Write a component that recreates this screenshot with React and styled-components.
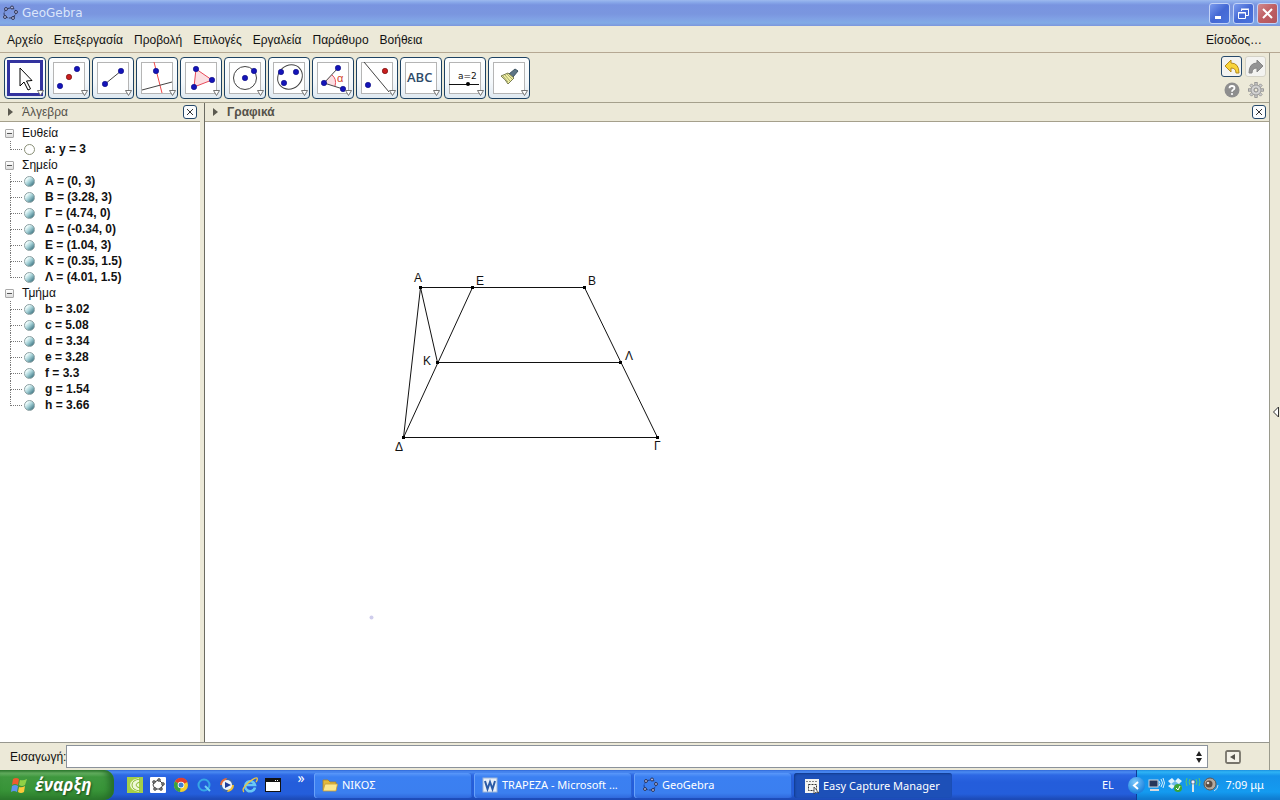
import React from "react";
import styled, { createGlobalStyle, css } from "styled-components";

const GlobalStyle = createGlobalStyle`
  * { box-sizing: border-box; }
  body { margin: 0; background: #ece9d8; }
  button, input { font: inherit; color: inherit; }
  button { padding: 0; border: 0; background: none; cursor: default; }
  ul { list-style: none; margin: 0; padding: 0; }
  svg { display: block; flex: none; }
`;

const Desktop = styled.div`
  display: flex;
  flex-direction: column;
  min-height: 100vh;
  font: 12px/16px "Liberation Sans", Arial, sans-serif;
  color: #111;
  background: #ece9d8;
`;

/* Title bar */

const TitleBar = styled.header`
  display: flex;
  align-items: center;
  gap: 4px;
  height: 26px;
  padding: 0 2px;
  background: linear-gradient(#9db9ee 0, #8aaaea 2px, #7994e0 5px, #7a96df 14px, #7f9fe4 18px, #82abe6 23px, #7c96dc 26px);
`;

const Title = styled.h1`
  flex: 1;
  margin: 0;
  font: 12px/18px "DejaVu Sans", Verdana, sans-serif;
  color: #dbe6fb;
`;

const CaptionButton = styled.button`
  display: grid;
  place-items: center;
  width: 21px;
  height: 21px;
  border: 1px solid #c3d3f7;
  border-radius: 3px;
  background: ${(p) =>
    p.$close
      ? "linear-gradient(135deg, #d08a90, #bf5e62 50%, #b0555e)"
      : "linear-gradient(135deg, #7c9cee, #4468d4 50%, #4a74dc)"};
`;

const CaptionGroup = styled.div`
  display: flex;
  gap: 3px;
`;

/* Menu */

const MenuBar = styled.nav`
  display: flex;
  align-items: center;
  gap: 11px;
  height: 27px;
  padding: 2px 18px 0 7px;
  border-bottom: 1px solid #b5a893;
`;

const MenuItem = styled.button`
  line-height: 16px;
  margin-left: ${(p) => (p.$end ? "auto" : "0")};
`;

/* Tool bar */

const Body = styled.div`
  flex: 1;
  display: flex;
`;

const Main = styled.main`
  flex: 1;
  min-width: 0;
  display: flex;
  flex-direction: column;
`;

const SideStrip = styled.aside`
  display: flex;
  align-items: center;
  justify-content: flex-end;
  width: 11px;
  border-left: 1px solid #9a9a8c;
`;

const ToolBar = styled.div`
  display: flex;
  justify-content: space-between;
  height: 50px;
  padding: 4px 3px 0 4px;
  border-bottom: 1px solid #a5a08c;
`;

const Tools = styled.div`
  display: flex;
  gap: 2px;
`;

const ToolButton = styled.button`
  display: grid;
  place-items: center;
  width: 42px;
  height: 42px;
  border: 1px solid #1d4263;
  border-radius: 4px;
  background: linear-gradient(#fdfefe, #f4f8fb 60%, #dfe9f1);
`;

const QuickActions = styled.div`
  display: grid;
  grid-template-columns: 21px 21px;
  gap: 2px 3px;
  align-content: start;
  margin-top: -1px;
`;

const QuickButton = styled.button`
  display: grid;
  place-items: center;
  width: 21px;
  height: 21px;
  border-radius: 3px;
  border: 1px solid ${(p) => (p.$frame ? p.$frame : "transparent")};
  background: ${(p) => (p.$frame ? "#f3f3f0" : "none")};
`;

/* Panels */

const Panels = styled.div`
  flex: 1;
  display: flex;
`;

const AlgebraPanel = styled.section`
  display: flex;
  flex-direction: column;
  width: 200px;
  background: #fff;
`;

const Splitter = styled.div`
  width: 5px;
  border-right: 1px solid #6b6b62;
  background: #ece9d8;
`;

const GraphicsPanel = styled.section`
  flex: 1;
  min-width: 0;
  display: flex;
  flex-direction: column;
  background: #fff;
`;

const PanelHeader = styled.header`
  display: flex;
  align-items: center;
  gap: 9px;
  height: 19px;
  padding: 0 3px 0 8px;
  background: #ece9d8;
  border-bottom: 1px solid #a5a08c;
`;

const PanelTitle = styled.h2`
  flex: 1;
  margin: 0;
  font-size: 12px;
  line-height: 16px;
  font-weight: ${(p) => (p.$active ? "bold" : "normal")};
  color: #55524a;
`;

const CloseButton = styled.button`
  display: grid;
  place-items: center;
  width: 14px;
  height: 14px;
  border: 1px solid #26496b;
  border-radius: 3px;
  background: #fbfcfd;
`;

/* Object tree */

const Tree = styled.ul`
  padding: 3px 0 0 5px;
`;

const GroupRow = styled.div`
  display: flex;
  align-items: center;
  gap: 8px;
  height: 16px;
`;

const Fold = styled.button`
  display: grid;
  place-items: center;
  width: 9px;
  height: 9px;
  border: 1px solid #a9a9a9;
  border-radius: 1px;
  background: linear-gradient(#fff, #ddd);
`;

const Item = styled.li`
  position: relative;
  display: flex;
  align-items: center;
  gap: 10px;
  height: 16px;
  padding-left: 19px;
  font-weight: bold;

  &::before {
    content: "";
    position: absolute;
    left: 5px;
    top: 0;
    width: 11px;
    height: 8px;
    border-left: 1px dotted #777;
    border-bottom: 1px dotted #777;
  }
  &:not(:last-child)::after {
    content: "";
    position: absolute;
    left: 5px;
    top: 8px;
    height: 8px;
    border-left: 1px dotted #777;
  }
`;

const Marble = styled.button`
  width: 11px;
  height: 11px;
  border-radius: 50%;
  border: 1px solid ${(p) => (p.$hidden ? "#8a9078" : "#8ba0a2")};
  background: ${(p) =>
    p.$hidden ? "#fff" : "linear-gradient(135deg, #f2ffff 20%, #a4d0d6 50%, #3c7482 90%)"};
`;

const Canvas = styled.svg`
  flex: 1;
  width: 100%;
  min-height: 340px;
`;

const PointLabel = styled.text`
  font: 12px "Liberation Sans", Arial, sans-serif;
  fill: #111;
`;

/* Input bar */

const InputBar = styled.form`
  display: flex;
  align-items: center;
  height: 28px;
  padding: 0 28px 0 10px;
  border-top: 1px solid #97978f;
`;

const InputLabel = styled.label`
  width: 56px;
`;

const InputBox = styled.div`
  flex: 1;
  display: flex;
  align-items: center;
  height: 23px;
  padding-right: 4px;
  margin-right: 17px;
  border: 1px solid #8b929b;
  background: #fff;
`;

const CommandInput = styled.input`
  flex: 1;
  height: 19px;
  padding: 0 3px;
  border: 0;
  outline: 0;
  background: none;
`;

/* Task bar */

const TaskBar = styled.footer`
  display: flex;
  height: 30px;
  font: 11px/16px "Noto Sans", "Open Sans", Tahoma, sans-serif;
  color: #fff;
  background: linear-gradient(#2f68d8 0, #4b8bf2 2px, #2d68e4 5px, #245ddb 12px, #245edb 24px, #1d4bb8 29px);
`;

const StartButton = styled.button`
  display: flex;
  align-items: center;
  gap: 7px;
  width: 114px;
  padding-left: 11px;
  border-radius: 0 10px 10px 0;
  font: italic bold 17px/22px "Open Sans", "Noto Sans", sans-serif;
  text-shadow: 1px 1px 2px #1c4a1c;
  background: linear-gradient(#2f7d2f 0, #6bb566 3px, #3f983f 7px, #389438 20px, #2e7f2e 29px);
  box-shadow: inset -5px 0 6px #276f2a;
`;

const QuickLaunch = styled.div`
  display: flex;
  align-items: center;
  gap: 7px;
  width: 200px;
  padding-left: 13px;
`;

const LaunchButton = styled.button`
  width: 16px;
  height: 16px;
`;

const More = styled.button`
  align-self: flex-start;
  width: 12px;
  margin-left: 7px;
  line-height: 16px;
  font-size: 14px;
`;

const Tasks = styled.div`
  flex: 1;
  display: flex;
  gap: 2px;
  padding: 3px 0 2px;
`;

const Task = styled.button`
  display: flex;
  align-items: center;
  gap: 4px;
  width: 158px;
  height: 25px;
  border-radius: 3px;
  text-align: left;
  white-space: nowrap;
  ${(p) =>
    p.$pressed
      ? css`
          padding-left: 10px;
          gap: 3px;
          background: #1d50b8;
          box-shadow: inset 1px 1px 2px #123a8c;
        `
      : css`
          padding: 0 0 2px 8px;
          background: linear-gradient(#5a98fa, #3b80f2 4px, #3b7ff0 20px, #3069dc);
          box-shadow: inset 1px 0 0 #6aa2fa, inset -1px 0 0 #2b62d4;
        `}
`;

const Language = styled.button`
  width: 34px;
  padding-right: 10px;
  text-align: left;
`;

const Tray = styled.div`
  display: flex;
  align-items: center;
  gap: 2px;
  width: 144px;
  border-left: 1px solid #0f3c96;
  background: linear-gradient(#1a8fdf 0, #2fb4f5 2px, #1592ea 6px, #149bf0 22px, #0f7cd0 29px);
`;

const TrayArrow = styled.button`
  display: grid;
  place-items: center;
  width: 17px;
  height: 17px;
  margin-left: -9px;
  border-radius: 50%;
  background: radial-gradient(circle at 40% 30%, #7cc8fb, #1f86e0 70%);
`;

const TrayIcons = styled.div`
  display: flex;
  gap: 2px;
`;

const Clock = styled.time`
  margin-left: auto;
  padding-right: 16px;
`;

/* Drawings */

const blue = { fill: "#1414b8", stroke: "#0a0a80" };
const Dot = ({ x, y, red }) => (
  <circle cx={x} cy={y} r="2.700" strokeWidth="0.6" {...(red ? { fill: "#c81e1e", stroke: "#600" } : blue)} />
);

const toolDrawings = {
  move: <path d="M14 7v18l4-4 4 8 2.5-1.2-4-7.8 5.5-.5z" fill="#fff" stroke="#000" />,
  point: (<><Dot x={10} y={27} /><Dot x={19} y={18} red /><Dot x={27} y={10} /></>),
  line: (<><path d="M11 25L27 12" stroke="#444" /><Dot x={11} y={25} /><Dot x={27} y={12} /></>),
  perpendicular: (<><path d="M16 3L24 34" stroke="#f04848" /><path d="M4 31L34 23" stroke="#444" /><Dot x={18} y={12} /></>),
  polygon: (<><path d="M14 10L30 21L12 28z" fill="#fbdfe2" stroke="#e84a5a" /><Dot x={14} y={10} /><Dot x={30} y={21} /><Dot x={12} y={28} /></>),
  circle: (<><circle cx="19" cy="19" r="11.5" fill="none" stroke="#444" /><Dot x={19} y={19} /><Dot x={28} y={12} /></>),
  ellipse: (<><ellipse cx="20" cy="18" rx="13" ry="11.500" transform="rotate(-42 20 18)" fill="none" stroke="#444" /><Dot x={11} y={13} /><Dot x={26} y={13} /><Dot x={14} y={24} /></>),
  angle: (
    <>
      <path d="M10 24L18 15Q22 19 21 27z" fill="#fbdfe2" />
      <path d="M18 16Q23 20 21 27" fill="none" stroke="#e84a5a" />
      <path d="M24 9L10 24L29 30" fill="none" stroke="#444" />
      <Dot x={24} y={9} /><Dot x={10} y={24} /><Dot x={29} y={30} />
      <text x="23" y="23" fontSize="11" fill="#d2442c">α</text>
    </>
  ),
  reflect: (<><path d="M6 3L31 33" stroke="#444" /><Dot x={27} y={12} red /><Dot x={10} y={26} /></>),
  text: <text x="5" y="23" fontSize="13" fontWeight="600" fontFamily="Open Sans" fill="#2d4a68">ABC</text>,
  slider: (<><text x="12" y="20" fontSize="9" fontFamily="DejaVu Sans" fill="#111">a=2</text><path d="M3 25.500H33" stroke="#111" /><circle cx="22" cy="25" r="2" /></>),
  brush: (
    <>
      <path d="M19 15L25 10L28 12L23 18z" fill="#5d7484" stroke="#3d5462" />
      <path d="M11 17L18 14L24 19L18 25Q16 21 11 17z" fill="#f2f0a0" stroke="#777b50" />
      <path d="M13 17L18 23M15 16L20 22M17 15L22 20" stroke="#8f9465" strokeWidth=".8" />
    </>
  ),
};

const Tool = ({ kind, label, selected }) => (
  <ToolButton aria-label={label} aria-pressed={!!selected}>
    <svg width="40" height="40" viewBox="0 0 40 40">
      {selected ? (
        <rect x="3.500" y="3.500" width="33" height="33" fill="#fff" stroke="#33339f" strokeWidth="3" />
      ) : (
        <rect x="4.500" y="4.500" width="31" height="31" fill="#fff" stroke="#b5b5b5" />
      )}
      <g transform={selected ? "translate(1 3)" : "translate(1 1)"}>{toolDrawings[kind]}</g>
      <path d="M32.500 32.500H38.500L35.500 37.500z" fill="#fff" stroke="#666" strokeWidth=".9" />
    </svg>
  </ToolButton>
);

const Cross = () => (
  <svg width="8" height="8" viewBox="0 0 8 8"><path d="M1 1L7 7M7 1L1 7" stroke="#333" /></svg>
);

const Disclosure = () => (
  <svg width="5" height="8" viewBox="0 0 5 8"><path d="M0 0L5 4L0 8z" fill="#5c5a50" /></svg>
);

const RingLogo = ({ size = 16, line = "#333c62" }) => (
  <svg width={size} height={size} viewBox="0 0 16 16">
    <ellipse cx="8" cy="8" rx="6" ry="5" fill="none" stroke={line} strokeDasharray="3 1" transform="rotate(-15 8 8)" />
    {[[4, 4], [10, 2.5], [14, 7], [11, 13], [3, 12]].map(([x, y]) => (
      <circle key={x} cx={x} cy={y} r="1.500" fill="#aab0de" stroke="#20243c" strokeWidth=".8" />
    ))}
  </svg>
);

const launchers = {
  Camtasia: (
    <svg width="16" height="16" viewBox="0 0 16 16">
      <rect width="16" height="16" fill="#a5cf48" />
      <path d="M12 1Q3 3 3 8T12 15" fill="#f0f8d8" />
      <path d="M13 2Q5 3 5 8T13 14M13 5Q9 6 9 8T13 11" fill="none" stroke="#8fbb3c" />
    </svg>
  ),
  GeoGebra: (
    <svg width="16" height="16" viewBox="0 0 16 16">
      <rect width="16" height="16" rx="1" fill="#fff" />
      <path d="M4 5L9 3L13 7L11 12L5 12L3 8z" fill="none" stroke="#444" />
      {[[4, 5], [9, 3], [13, 7], [11, 12], [5, 12]].map(([x, y]) => (
        <circle key={x} cx={x} cy={y} r="1.400" fill="#888" stroke="#222" strokeWidth=".6" />
      ))}
    </svg>
  ),
  Chrome: (
    <svg width="16" height="16" viewBox="0 0 16 16">
      <circle cx="8" cy="8" r="7" fill="#f4cf2c" />
      <path d="M8 8L2 4.400A7 7 0 0 1 14.500 5z" fill="#e0402e" />
      <path d="M8 8L2 4.400A7 7 0 0 0 7 15z" fill="#3ba23f" />
      <circle cx="8" cy="8" r="3.300" fill="#fff" /><circle cx="8" cy="8" r="2.500" fill="#3d7fd6" />
    </svg>
  ),
  QuickTime: (
    <svg width="16" height="16" viewBox="0 0 16 16">
      <circle cx="8" cy="8" r="5.500" fill="none" stroke="#36a6e6" strokeWidth="2" />
      <path d="M9 9L14 14" stroke="#6fd0f4" strokeWidth="2" />
    </svg>
  ),
  "Media Player": (
    <svg width="16" height="16" viewBox="0 0 16 16">
      <circle cx="8" cy="8" r="7" fill="#3567b8" />
      <path d="M8 1A7 7 0 0 0 1 8H5z" fill="#e66a3a" /><path d="M8 15A7 7 0 0 0 15 8H11z" fill="#f0bf34" />
      <circle cx="8" cy="8" r="5" fill="#eef3fb" /><path d="M6 5L12 8L6 11z" fill="#203c9a" />
    </svg>
  ),
  "Internet Explorer": (
    <svg width="16" height="16" viewBox="0 0 16 16">
      <path d="M13 10.500A5 5 0 1 1 13 8H4" fill="none" stroke="#69c7f5" strokeWidth="2.600" />
      <path d="M2 15Q-1 12 6 6T15 1Q16 3 14 5" fill="none" stroke="#f0c63c" strokeWidth="1.300" />
    </svg>
  ),
  Window: (
    <svg width="16" height="16" viewBox="0 0 16 16">
      <rect x=".5" y="1.500" width="15" height="13" fill="#fff" stroke="#111" />
      <path d="M1 3.500H15" stroke="#111" strokeWidth="3" /><path d="M10 3.500H14" stroke="#fff" strokeDasharray="1 1" />
    </svg>
  ),
};

const FolderIcon = () => (
  <svg width="16" height="16" viewBox="0 0 16 16">
    <path d="M1 3H6L8 5H14V13H1z" fill="#e2b93c" stroke="#a8842a" strokeWidth=".8" />
    <path d="M3 7H15.500L14 14H1z" fill="#fbe88e" stroke="#c79a34" strokeWidth=".8" />
  </svg>
);

const WordIcon = () => (
  <svg width="16" height="16" viewBox="0 0 16 16">
    <rect x="1" y="1" width="14" height="14" fill="#e8eff9" stroke="#9db5d8" />
    <path d="M3 4L5.500 12L8 5L10.500 12L13 4" fill="none" stroke="#2a5aa6" strokeWidth="2" />
  </svg>
);

const CaptureIcon = () => (
  <svg width="16" height="16" viewBox="0 0 16 16">
    <rect x="1" y="1" width="14" height="14" fill="#f5f5f2" />
    <path d="M2 3.500H14" stroke="#888" strokeDasharray="2 1" />
    <rect x="4.500" y="6.500" width="8" height="6" fill="none" stroke="#333" strokeDasharray="2 1" />
    <path d="M10 9V16L12 14L15 15z" fill="#fff" stroke="#333" strokeWidth=".8" />
  </svg>
);

const Windows = () => (
  <svg width="17" height="17" viewBox="0 0 17 17">
    <path d="M2 2Q5 0 8 2L7 8Q4 6 1 8z" fill="#ee5b2e" />
    <path d="M9 3Q12 4 16 2L14 8Q11 10 8 8z" fill="#8fd146" />
    <path d="M1 9Q4 7 7 9L6 15Q3 13 0 15z" fill="#5d94ee" />
    <path d="M8 10Q11 11 14 9L13 15Q10 17 7 15z" fill="#fcc93a" />
  </svg>
);

const TraySymbols = () => (
  <TrayIcons>
    <svg width="18" height="16" viewBox="0 0 18 16">
      <rect x="2" y="3" width="9" height="7" fill="#26375a" stroke="#cfd6de" /><path d="M3 13H12" stroke="#d8dade" strokeWidth="2" />
      <path d="M12 4Q14 6 12 9M14 2Q17 6 14 10M16 1Q19 6 16 11" fill="none" stroke="#d6effc" />
    </svg>
    <svg width="16" height="16" viewBox="0 0 16 16">
      <path d="M1 4L5 1L8 4L11 1L15 4L12 7L15 10L11 12L8 9L5 12L1 9L4 7z" fill="#dff1fc" />
      <path d="M4 7L8 4L12 7L8 9z" fill="#6bb8ea" /><circle cx="11" cy="11" r="4" fill="#38a538" />
      <path d="M9 11L11 13L13 9" fill="none" stroke="#fff" />
    </svg>
    <svg width="16" height="16" viewBox="0 0 16 16">
      <path d="M8 6V15" stroke="#d9e3e8" strokeWidth="2" /><circle cx="8" cy="5" r="2" fill="#eef" stroke="#456" strokeWidth=".6" />
      <path d="M5 2Q3 5 5 8M11 2Q13 5 11 8M2 1Q0 5 2 9M14 1Q16 5 14 9" fill="none" stroke="#5cc96a" />
    </svg>
    <svg width="16" height="16" viewBox="0 0 16 16">
      <circle cx="7" cy="7" r="6" fill="#b4aaa0" stroke="#5f564e" /><circle cx="6" cy="7" r="3.500" fill="#5a4c44" /><circle cx="5" cy="6" r="1.300" fill="#ddd" />
      <path d="M11 14Q15 12 15 8" fill="none" stroke="#c8dff4" />
    </svg>
  </TrayIcons>
);

const arrowPath = "M1 7L7 1V4Q15 4 15 14H12Q12 9 7 9V13z";
const gearTeeth = [0, 45, 90, 135, 180, 225, 270, 315];

/* Data */

const menus = ["Αρχείο", "Επεξεργασία", "Προβολή", "Επιλογές", "Εργαλεία", "Παράθυρο", "Βοήθεια"];

const tools = [
  ["move", "Μετακίνηση"], ["point", "Σημείο"], ["line", "Ευθεία"], ["perpendicular", "Κάθετη"],
  ["polygon", "Πολύγωνο"], ["circle", "Κύκλος"], ["ellipse", "Έλλειψη"], ["angle", "Γωνία"],
  ["reflect", "Ανάκλαση"], ["text", "Κείμενο"], ["slider", "Δρομέας"], ["brush", "Στυλ"],
];

const groups = [
  { name: "Ευθεία", items: ["a: y = 3"], hidden: true },
  { name: "Σημείο", items: ["Α = (0, 3)", "Β = (3.28, 3)", "Γ = (4.74, 0)", "Δ = (-0.34, 0)", "Ε = (1.04, 3)", "Κ = (0.35, 1.5)", "Λ = (4.01, 1.5)"] },
  { name: "Τμήμα", items: ["b = 3.02", "c = 5.08", "d = 3.34", "e = 3.28", "f = 3.3", "g = 1.54", "h = 3.66"] },
];

const points = [
  { name: "Α", x: 215, y: 165, lx: 209, ly: 160 },
  { name: "Ε", x: 267, y: 165, lx: 271, ly: 163 },
  { name: "Β", x: 379, y: 165, lx: 383, ly: 163 },
  { name: "Κ", x: 232, y: 240, lx: 218, ly: 243 },
  { name: "Λ", x: 415, y: 240, lx: 420, ly: 238 },
  { name: "Δ", x: 198, y: 315, lx: 190, ly: 329 },
  { name: "Γ", x: 452, y: 315, lx: 449, ly: 328 },
];
const at = Object.fromEntries(points.map((p) => [p.name, p]));
const segments = ["ΑΒ", "ΒΓ", "ΓΔ", "ΔΑ", "ΔΕ", "ΑΚ", "ΚΛ"];

export default function App() {
  return (
    <Desktop>
      <GlobalStyle />
      <TitleBar>
        <RingLogo />
        <Title>GeoGebra</Title>
        <CaptionGroup>
          <CaptionButton aria-label="Ελαχιστοποίηση">
            <svg width="13" height="13"><path d="M2 10.500H8" stroke="#fff" strokeWidth="3" /></svg>
          </CaptionButton>
          <CaptionButton aria-label="Επαναφορά">
            <svg width="13" height="13" viewBox="0 0 13 13" fill="none" stroke="#fff">
              <path d="M4.500 4V2.500H11.500V8.500H9M4 2H12" /><path d="M1.500 5.500H8.500V11.500H1.500zM1 6H9" />
            </svg>
          </CaptionButton>
          <CaptionButton $close aria-label="Κλείσιμο">
            <svg width="13" height="13"><path d="M2 2L11 11M11 2L2 11" stroke="#fff" strokeWidth="2" /></svg>
          </CaptionButton>
        </CaptionGroup>
      </TitleBar>

      <MenuBar>
        {menus.map((m) => <MenuItem key={m}>{m}</MenuItem>)}
        <MenuItem $end>Είσοδος…</MenuItem>
      </MenuBar>

      <Body>
        <Main>
          <ToolBar>
            <Tools>
              {tools.map(([kind, label], i) => <Tool key={kind} kind={kind} label={label} selected={i === 0} />)}
            </Tools>
            <QuickActions>
              <QuickButton $frame="#26496b" aria-label="Αναίρεση">
                <svg width="16" height="15" viewBox="0 0 16 15"><path d={arrowPath} fill="#f9d43a" stroke="#b58a1c" /></svg>
              </QuickButton>
              <QuickButton $frame="#d4d2c6" aria-label="Επανάληψη">
                <svg width="16" height="15" viewBox="0 0 16 15"><path d={arrowPath} transform="matrix(-1 0 0 1 16 0)" fill="#949494" stroke="#858585" /></svg>
              </QuickButton>
              <QuickButton aria-label="Βοήθεια">
                <svg width="16" height="16" viewBox="0 0 16 16">
                  <circle cx="8" cy="8" r="7.500" fill="#8e8e8e" />
                  <path d="M5.500 6.200Q5.500 4 8 4T10.500 6Q10.500 7 9.200 7.800Q8 8.500 8 9.800" fill="none" stroke="#fff" strokeWidth="1.800" />
                  <circle cx="8" cy="12" r="1.100" fill="#fff" />
                </svg>
              </QuickButton>
              <QuickButton aria-label="Ρυθμίσεις">
                <svg width="16" height="16" viewBox="0 0 16 16">
                  {gearTeeth.map((a) => <rect key={a} x="6.800" y=".5" width="2.400" height="4" fill="#ccc" stroke="#8c8c8c" strokeWidth=".8" transform={`rotate(${a} 8 8)`} />)}
                  <circle cx="8" cy="8" r="5" fill="#d2d2d2" stroke="#909090" strokeWidth=".8" />
                  <circle cx="8" cy="8" r="2" fill="#ece9d8" stroke="#888" />
                </svg>
              </QuickButton>
            </QuickActions>
          </ToolBar>

          <Panels>
            <AlgebraPanel>
              <PanelHeader>
                <Disclosure />
                <PanelTitle>Άλγεβρα</PanelTitle>
                <CloseButton aria-label="Κλείσιμο"><Cross /></CloseButton>
              </PanelHeader>
              <Tree>
                {groups.map((g) => (
                  <li key={g.name}>
                    <GroupRow>
                      <Fold aria-label={g.name}><svg width="5" height="1"><path d="M0 .5H5" stroke="#555" /></svg></Fold>
                      {g.name}
                    </GroupRow>
                    <ul>
                      {g.items.map((t) => (
                        <Item key={t}><Marble $hidden={g.hidden} aria-label={t} />{t}</Item>
                      ))}
                    </ul>
                  </li>
                ))}
              </Tree>
            </AlgebraPanel>
            <Splitter />
            <GraphicsPanel>
              <PanelHeader>
                <Disclosure />
                <PanelTitle $active>Γραφικά</PanelTitle>
                <CloseButton aria-label="Κλείσιμο"><Cross /></CloseButton>
              </PanelHeader>
              <Canvas>
                <g transform="translate(.5 .5)">
                  {segments.map(([p, q]) => (
                    <line key={p + q} x1={at[p].x} y1={at[p].y} x2={at[q].x} y2={at[q].y} stroke="#111" />
                  ))}
                  {points.map((p) => <rect key={p.name} x={p.x - 1.5} y={p.y - 1.5} width="3" height="3" fill="#000" />)}
                  <circle cx="166" cy="495" r="2" fill="#cfcdec" />
                </g>
                {points.map((p) => <PointLabel key={p.name} x={p.lx} y={p.ly}>{p.name}</PointLabel>)}
              </Canvas>
            </GraphicsPanel>
          </Panels>

          <InputBar onSubmit={(e) => e.preventDefault()}>
            <InputLabel htmlFor="command">Εισαγωγή:</InputLabel>
            <InputBox>
              <CommandInput id="command" />
              <svg width="8" height="14" viewBox="0 0 8 14"><path d="M4 1L7 6H1zM4 13L1 8H7z" fill="#222" /></svg>
            </InputBox>
            <button type="button" aria-label="Βοήθεια εισαγωγής">
              <svg width="16" height="14" viewBox="0 0 16 14">
                <rect x="1" y="1" width="14" height="12" rx="1.500" fill="#f4f2e8" stroke="#77746a" strokeWidth="1.800" />
                <path d="M10 4V10L5 7z" fill="#55534c" />
              </svg>
            </button>
          </InputBar>
        </Main>
        <SideStrip>
          <button aria-label="Άνοιγμα πλευρικής στήλης">
            <svg width="8" height="12" viewBox="0 0 8 12"><path d="M6.500 1V11L1.500 6z" fill="#fff" stroke="#333" /></svg>
          </button>
        </SideStrip>
      </Body>

      <TaskBar>
        <StartButton><Windows />έναρξη</StartButton>
        <QuickLaunch>
          {Object.entries(launchers).map(([name, icon]) => <LaunchButton key={name} aria-label={name}>{icon}</LaunchButton>)}
          <More>»</More>
        </QuickLaunch>
        <Tasks>
          <Task><FolderIcon />ΝΙΚΟΣ</Task>
          <Task><WordIcon />TRAPEZA - Microsoft ...</Task>
          <Task><RingLogo line="#1b3f96" />GeoGebra</Task>
          <Task $pressed><CaptureIcon />Easy Capture Manager</Task>
        </Tasks>
        <Language>EL</Language>
        <Tray>
          <TrayArrow aria-label="Εμφάνιση κρυφών εικονιδίων">
            <svg width="9" height="9"><path d="M6 1L2 4.500L6 8" fill="none" stroke="#fff" strokeWidth="2" /></svg>
          </TrayArrow>
          <TraySymbols />
          <Clock>7:09 μμ</Clock>
        </Tray>
      </TaskBar>
    </Desktop>
  );
}
